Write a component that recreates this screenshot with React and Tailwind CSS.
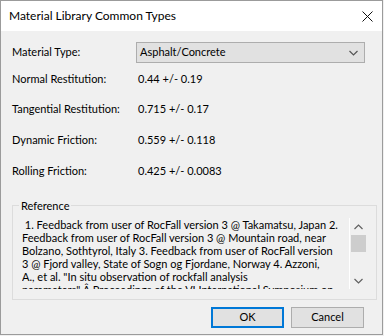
import React from "react";

const font = { fontFamily: 'Lato, "Liberation Sans", Arial, sans-serif' };

const refLines = [
  " 1. Feedback from user of RocFall version 3 @ Takamatsu, Japan 2.",
  "Feedback from user of RocFall version 3 @ Mountain road, near",
  "Bolzano, Sothtyrol, Italy 3. Feedback from user of RocFall version",
  "3 @ Fjord valley, State of Sogn og Fjordane, Norway 4. Azzoni,",
  "A., et al. \"In situ observation of rockfall analysis",
  "parameters\" Â Proceedings of the VI International Symposium on",
];

// one label / value row of the dialog
function Row({ label, value, className }) {
  return (
    <div className={`flex items-center h-4 ${className}`}>
      <span className="w-[126px]">{label}</span>
      <span>{value}</span>
    </div>
  );
}

function Chevron({ up, className }) {
  return (
    <svg width="9" height="6" viewBox="0 0 9 6" className={className}>
      <path
        d={up ? "M0.5 5 L4.5 1 L8.5 5" : "M0.5 1 L4.5 5 L8.5 1"}
        fill="none"
        stroke="currentColor"
        strokeWidth="1.2"
      />
    </svg>
  );
}

export default function App() {
  return (
    <div className="w-[384px] h-[336px] bg-[#f0f0f0]" style={font}>
      <div className="w-[383px] h-[335px] border border-[#9b9b9b] flex flex-col bg-[#f0f0f0] text-[11px] text-black">
        {/* title bar */}
        <div className="h-[30px] bg-white flex items-center justify-between pl-2 pr-[9px] shrink-0">
          <span className="text-[12px]">Material Library Common Types</span>
          <svg width="11" height="11" viewBox="0 0 11 11">
            <path d="M0.5 0.5 L10.5 10.5 M10.5 0.5 L0.5 10.5" stroke="#111" strokeWidth="1" />
          </svg>
        </div>

        <div className="flex flex-col px-[11px] flex-1">
          {/* material type select */}
          <div className="flex items-center mt-[11px] h-[21px]">
            <span className="w-[124px]">Material Type:</span>
            <div className="flex-1 h-[21px] mr-[6px] bg-[#e1e1e1] border border-[#adadad] flex items-center justify-between pl-[3px] pr-[6px]">
              <span>Asphalt/Concrete</span>
              <Chevron className="text-[#555]" />
            </div>
          </div>

          <Row label="Normal Restitution:" value="0.44 +/- 0.19" className="mt-[8px]" />
          <Row label="Tangential Restitution:" value="0.715 +/- 0.17" className="mt-[14px]" />
          <Row label="Dynamic Friction:" value="0.559 +/- 0.118" className="mt-[15px]" />
          <Row label="Rolling Friction:" value="0.425 +/- 0.0083" className="mt-[15px]" />

          {/* reference group box */}
          <div className="relative mt-[26px] w-[365px] h-[95px] border border-[#dcdcdc] flex pl-[9px] pt-[12px]">
            <span className="absolute -top-[8px] left-[6px] px-[2px] bg-[#f0f0f0]">Reference</span>
            <div className="w-[327px] h-[71px] overflow-hidden leading-[13px] whitespace-pre">
              {refLines.map((l, i) => (
                <div key={i}>{l}</div>
              ))}
            </div>
            <div className="w-[18px] h-[71px] border-l border-white flex flex-col items-center text-[#606060]">
              <div className="h-[17px] flex items-center justify-center">
                <Chevron up />
              </div>
              <div className="w-[15px] h-[17px] bg-[#cdcdcd]" />
              <div className="flex-1" />
              <div className="h-[17px] flex items-center justify-center">
                <Chevron />
              </div>
            </div>
          </div>

          {/* buttons */}
          <div className="flex justify-end gap-[7px] mt-[7px] mr-[7px]">
            <button className="w-[73px] h-[21px] bg-[#e1e1e1] border-2 border-[#0078d7] flex items-center justify-center">
              OK
            </button>
            <button className="w-[73px] h-[21px] bg-[#e1e1e1] border border-[#adadad] flex items-center justify-center">
              Cancel
            </button>
          </div>
        </div>
      </div>
    </div>
  );
}
